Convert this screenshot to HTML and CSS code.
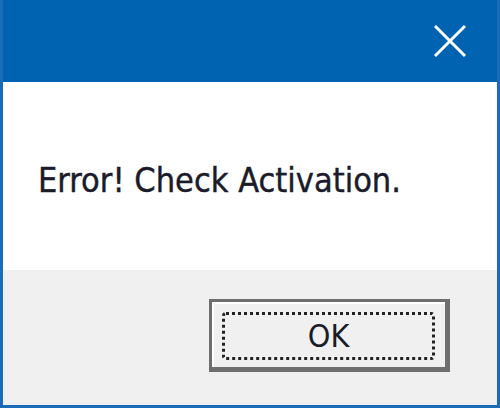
FILE: index.html
```html
<!DOCTYPE html>
<html lang="en">

<head>
    <meta charset="UTF-8">
    <title>Error</title>
    <link rel="stylesheet" href="styles.css">
</head>

<body>
    <div class="window">
        <div class="titlebar">
            <button class="close" aria-label="Close">
                <svg width="34" height="34" viewBox="0 0 34 34">
                    <path d="M2 2 L32 32 M32 2 L2 32" stroke="#ffffff" stroke-width="3" fill="none" />
                </svg>
            </button>
        </div>
        <div class="message">
            <p>Error! Check Activation.</p>
        </div>
        <div class="footer">
            <button class="ok"><span class="focus">OK</span></button>
        </div>
    </div>
</body>

</html>
```

FILE: styles.css
```css
body {
    margin: 0;
    padding: 0;
    font-family: "DejaVu Sans Condensed", "DejaVu Sans", sans-serif;
}

.window {
    width: 500px;
    height: 408px;
    box-sizing: border-box;
    background-color: #0063b1;
    border: 3px solid #1a6cb8;
    border-top: none;
    display: flex;
    flex-direction: column;
}

.titlebar {
    height: 82px;
    background-color: #0063b1;
    display: flex;
    justify-content: flex-end;
    align-items: center;
}

.close {
    width: 80px;
    height: 82px;
    background: none;
    border: none;
    padding: 0;
    display: flex;
    align-items: center;
    justify-content: center;
    margin-right: 7px;
}

.message {
    background-color: #ffffff;
    height: 188px;
    display: flex;
    align-items: center;
    padding: 8px 0 0 35px;
    box-sizing: border-box;
}

.message p {
    margin: 0;
    font-size: 34px;
    color: #1b1b2a;
    -webkit-text-stroke: 0.4px #1b1b2a;
}

.footer {
    flex: 1;
    background-color: #f0f0f0;
    display: flex;
    justify-content: flex-end;
    align-items: center;
    padding-right: 47px;
}

.ok {
    width: 241px;
    height: 73px;
    box-sizing: border-box;
    background-color: #f0f0f0;
    border: 3px solid #6e6e6e;
    border-right-width: 5px;
    border-bottom-width: 5px;
    box-shadow: inset 2px 2px 0 #ffffff;
    padding: 10px 10px 7px 10px;
    margin-top: -4px;
    font-family: "DejaVu Sans Condensed", "DejaVu Sans", sans-serif;
    font-size: 32px;
    color: #1b1b2a;
}

.focus {
    display: flex;
    align-items: center;
    justify-content: center;
    height: 100%;
    border: 3px dotted #222222;
    border-radius: 4px;
    box-sizing: border-box;
}
```
